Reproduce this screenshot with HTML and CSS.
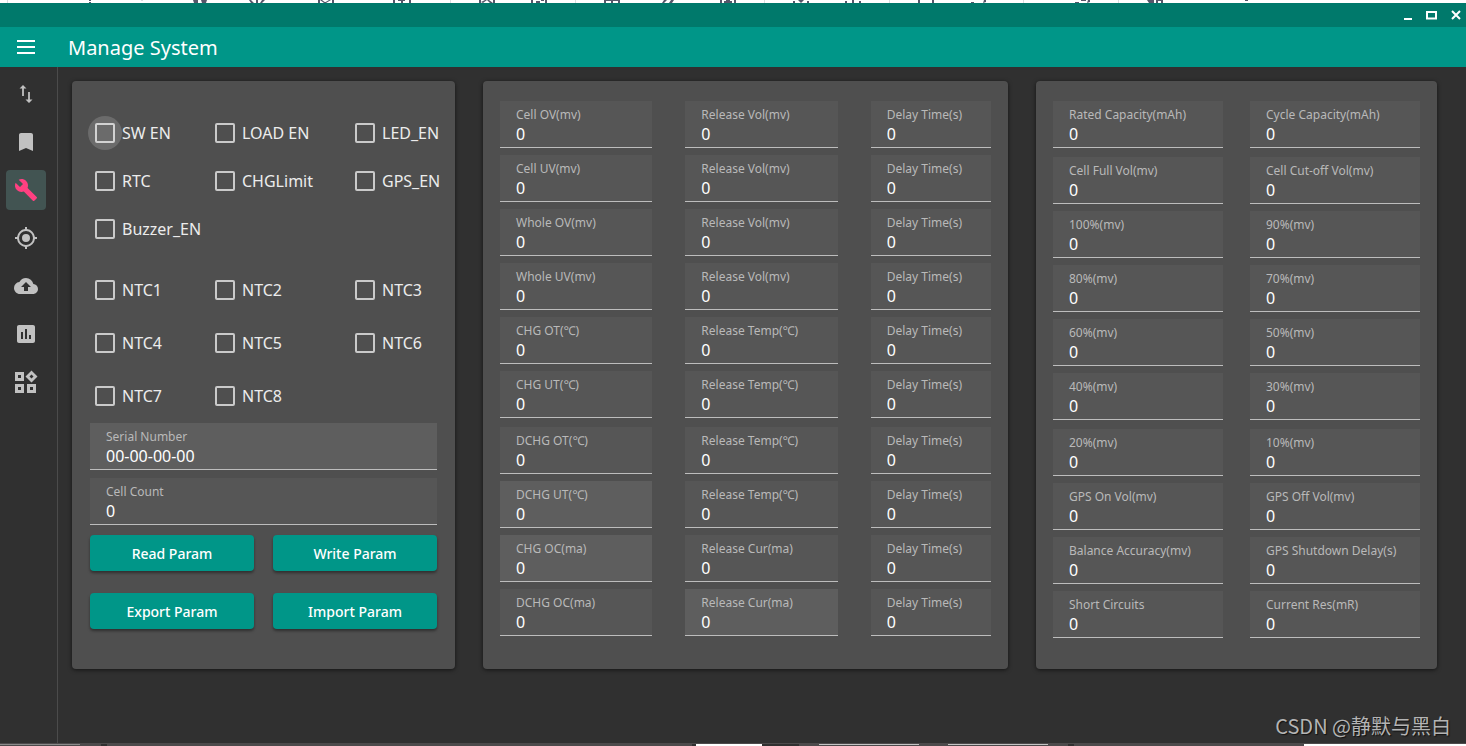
FILE: index.html
```html
<!DOCTYPE html>
<html lang="en">
<head>
<meta charset="utf-8">
<title>Manage System</title>
<link rel="stylesheet" href="styles.css">
</head>
<body>
<svg class="strip strip-top" aria-hidden="true">
  <path class="ink" d="M89 0h2v1h-2zM89 2h2v1h-2zM193 0h5v3h-4zM201 0h6l-1 3h-4zM249 0h2l3 3h-3zM256 0h2v3h-2zM262 0h3l-3 3h-2zM318 0h2v3h-2zM332 0h2v3h-2zM320 0l4 3h2l-4-3zM331 0l-5 3h-2l5-3zM393 0h2v3h-2zM409 0h2v3h-2zM398 0h7v1h-7zM401 1h2v2h-2zM479 0h2v3h-2zM493 0h2v3h-2zM481 2l4-2h2l-4 3zM489 0l4 3h-3l-3-3zM531 0h2v3h-2zM545 0h2v3h-2zM536 1h4v2h-4zM541 0h3v1h-3zM604 0h16v3h-2v-2h-5v2h-2v-2h-5v2h-2zM664 0h3l-3 3h-2zM671 0h3l-2 3h-3zM720 0h2v3h-2zM724 1h8v2h-8zM734 0h2v3h-2zM726 0h4v1h-4zM793 1h2v2h-2zM798 0h6l-3 3zM807 1h2v2h-2zM845 1h2v2h-2zM852 0h2v3h-2zM859 1h2v2h-2zM918 0h2v3h-2zM932 0h2v3h-2zM971 2h3v1h-3zM984 0h2v2l-3 1zM1075 2h4v1h-4zM1081 0h5v1h-5zM1088 0h2v2l-3 1zM1147 0h7v3h-5zM1156 0h7v1h-5v2h-2zM1161 1h2v2h-2zM1245 0h3v1h-3z"/>
  <path class="rule" d="M7 0h1v3h-1zM141 0h2v1h-2zM450 0h1v3h-1zM575 0h1v3h-1zM764 0h1v3h-1zM889 0h1v3h-1zM1023 0h1v3h-1zM1118 0h1v3h-1z"/>
</svg>
<div class="titlebar">
  <button class="win" aria-label="Minimize"><svg width="12" height="12"><path d="M2 10h8" stroke-width="2"/></svg></button>
  <button class="win" aria-label="Maximize"><svg width="12" height="12"><path d="M0 3h11M1 3v7M10 3v7M0 9.500h11" stroke-width="2"/></svg></button>
  <button class="win" aria-label="Close"><svg width="12" height="12"><path d="M2 2l8 8M10 2l-8 8" stroke-width="2"/></svg></button>
</div>
<header class="appbar">
  <button class="menu" aria-label="Menu"><svg width="18" height="14"><path d="M0 1h18M0 7h18M0 13h18" stroke="#fff" stroke-width="2"/></svg></button>
  <h1>Manage System</h1>
</header>
<div class="shell">
  <nav class="side" aria-label="Main">
    <button aria-label="Transfer"><svg viewBox="0 0 24 24"><path d="M9 3 5.500 6.500h2.600V14h1.800V6.500h2.600zM15.900 17.500V10h-1.800v7.500h-2.600L15 21l3.500-3.500z"/></svg></button>
    <button aria-label="Bookmarks"><svg viewBox="0 0 24 24"><path d="M17 3H7c-1.100 0-2 .9-2 2v16l7-3 7 3V5c0-1.100-.9-2-2-2z"/></svg></button>
    <button class="on" aria-label="Manage"><svg viewBox="0 0 24 24"><path d="m22.700 19-9.100-9.100c.9-2.300.4-5-1.500-6.900-2-2-5-2.400-7.400-1.300L9 6 6 9 1.600 4.700C.4 7.100.9 10.100 2.900 12.100c1.900 1.900 4.600 2.400 6.900 1.500l9.100 9.100c.4.4 1 .4 1.400 0l2.300-2.300c.5-.4.5-1.100.1-1.400z"/></svg></button>
    <button aria-label="Location"><svg viewBox="0 0 24 24"><path d="M12 8a4 4 0 1 0 0 8 4 4 0 0 0 0-8zm8.940 3A8.990 8.990 0 0 0 13 3.060V1h-2v2.060A8.990 8.990 0 0 0 3.060 11H1v2h2.060A8.990 8.990 0 0 0 11 20.940V23h2v-2.060A8.990 8.990 0 0 0 20.940 13H23v-2h-2.060zM12 19a7 7 0 1 1 0-14 7 7 0 0 1 0 14z"/></svg></button>
    <button aria-label="Upload"><svg viewBox="0 0 24 24"><path d="M19.350 10.040A7.490 7.490 0 0 0 12 4C9.110 4 6.600 5.640 5.350 8.040A5.994 5.994 0 0 0 0 14c0 3.310 2.690 6 6 6h13c2.760 0 5-2.240 5-5 0-2.640-2.050-4.780-4.650-4.960zM14 13v4h-4v-4H7l5-5 5 5h-3z"/></svg></button>
    <button aria-label="Statistics"><svg viewBox="0 0 24 24"><path d="M19 3H5c-1.100 0-2 .9-2 2v14c0 1.100.9 2 2 2h14c1.100 0 2-.9 2-2V5c0-1.100-.9-2-2-2zM9 17H7v-7h2v7zm4 0h-2V7h2v10zm4 0h-2v-4h2v4z"/></svg></button>
    <button aria-label="Widgets"><svg viewBox="0 0 24 24"><path fill-rule="evenodd" d="M1 2h9v9H1zm3 3v3h3V5zM1 14h9v9H1zm3 3v3h3v-3zM13 14h9v9h-9zm3 3v3h3v-3zM17.500.5l6 6-6 6-6-6zm0 4-2 2 2 2 2-2z"/></svg></button>
  </nav>
  <main class="cards" id="cards">
    <section class="card card-switches">
      <div class="checks">
        <label class="focus"><input type="checkbox">SW EN</label>
        <label><input type="checkbox">LOAD EN</label>
        <label><input type="checkbox">LED_EN</label>
        <label><input type="checkbox">RTC</label>
        <label><input type="checkbox">CHGLimit</label>
        <label><input type="checkbox">GPS_EN</label>
        <label><input type="checkbox">Buzzer_EN</label>
      </div>
      <div class="checks checks-ntc">
        <label><input type="checkbox">NTC1</label>
        <label><input type="checkbox">NTC2</label>
        <label><input type="checkbox">NTC3</label>
        <label><input type="checkbox">NTC4</label>
        <label><input type="checkbox">NTC5</label>
        <label><input type="checkbox">NTC6</label>
        <label><input type="checkbox">NTC7</label>
        <label><input type="checkbox">NTC8</label>
      </div>
      <div class="identity">
        <label class="field lit"><span>Serial Number</span><input type="text" value="00-00-00-00"></label>
        <label class="field"><span>Cell Count</span><input type="text" value="0"></label>
      </div>
      <div class="actions">
        <button>Read Param</button>
        <button>Write Param</button>
        <button>Export Param</button>
        <button>Import Param</button>
      </div>
    </section>
    <section class="card card-protect">
      <div class="fields">
        <label class="field"><span>Cell OV(mv)</span><input type="text" value="0"></label>
        <label class="field"><span>Release Vol(mv)</span><input type="text" value="0"></label>
        <label class="field"><span>Delay Time(s)</span><input type="text" value="0"></label>
        <label class="field"><span>Cell UV(mv)</span><input type="text" value="0"></label>
        <label class="field"><span>Release Vol(mv)</span><input type="text" value="0"></label>
        <label class="field"><span>Delay Time(s)</span><input type="text" value="0"></label>
        <label class="field"><span>Whole OV(mv)</span><input type="text" value="0"></label>
        <label class="field"><span>Release Vol(mv)</span><input type="text" value="0"></label>
        <label class="field"><span>Delay Time(s)</span><input type="text" value="0"></label>
        <label class="field"><span>Whole UV(mv)</span><input type="text" value="0"></label>
        <label class="field"><span>Release Vol(mv)</span><input type="text" value="0"></label>
        <label class="field"><span>Delay Time(s)</span><input type="text" value="0"></label>
        <label class="field"><span>CHG OT(℃)</span><input type="text" value="0"></label>
        <label class="field"><span>Release Temp(℃)</span><input type="text" value="0"></label>
        <label class="field"><span>Delay Time(s)</span><input type="text" value="0"></label>
        <label class="field"><span>CHG UT(℃)</span><input type="text" value="0"></label>
        <label class="field"><span>Release Temp(℃)</span><input type="text" value="0"></label>
        <label class="field"><span>Delay Time(s)</span><input type="text" value="0"></label>
      </div>
      <div class="fields">
        <label class="field"><span>DCHG OT(℃)</span><input type="text" value="0"></label>
        <label class="field"><span>Release Temp(℃)</span><input type="text" value="0"></label>
        <label class="field"><span>Delay Time(s)</span><input type="text" value="0"></label>
        <label class="field lit"><span>DCHG UT(℃)</span><input type="text" value="0"></label>
        <label class="field"><span>Release Temp(℃)</span><input type="text" value="0"></label>
        <label class="field"><span>Delay Time(s)</span><input type="text" value="0"></label>
        <label class="field lit"><span>CHG OC(ma)</span><input type="text" value="0"></label>
        <label class="field"><span>Release Cur(ma)</span><input type="text" value="0"></label>
        <label class="field"><span>Delay Time(s)</span><input type="text" value="0"></label>
        <label class="field"><span>DCHG OC(ma)</span><input type="text" value="0"></label>
        <label class="field lit"><span>Release Cur(ma)</span><input type="text" value="0"></label>
        <label class="field"><span>Delay Time(s)</span><input type="text" value="0"></label>
      </div>
    </section>
    <section class="card card-capacity">
      <div class="fields">
        <label class="field"><span>Rated Capacity(mAh)</span><input type="text" value="0"></label>
        <label class="field"><span>Cycle Capacity(mAh)</span><input type="text" value="0"></label>
      </div>
      <div class="fields">
        <label class="field"><span>Cell Full Vol(mv)</span><input type="text" value="0"></label>
        <label class="field"><span>Cell Cut-off Vol(mv)</span><input type="text" value="0"></label>
        <label class="field"><span>100%(mv)</span><input type="text" value="0"></label>
        <label class="field"><span>90%(mv)</span><input type="text" value="0"></label>
        <label class="field"><span>80%(mv)</span><input type="text" value="0"></label>
        <label class="field"><span>70%(mv)</span><input type="text" value="0"></label>
        <label class="field"><span>60%(mv)</span><input type="text" value="0"></label>
        <label class="field"><span>50%(mv)</span><input type="text" value="0"></label>
        <label class="field"><span>40%(mv)</span><input type="text" value="0"></label>
        <label class="field"><span>30%(mv)</span><input type="text" value="0"></label>
      </div>
      <div class="fields">
        <label class="field"><span>20%(mv)</span><input type="text" value="0"></label>
        <label class="field"><span>10%(mv)</span><input type="text" value="0"></label>
        <label class="field"><span>GPS On Vol(mv)</span><input type="text" value="0"></label>
        <label class="field"><span>GPS Off Vol(mv)</span><input type="text" value="0"></label>
        <label class="field"><span>Balance Accuracy(mv)</span><input type="text" value="0"></label>
        <label class="field"><span>GPS Shutdown Delay(s)</span><input type="text" value="0"></label>
        <label class="field"><span>Short Circuits</span><input type="text" value="0"></label>
        <label class="field"><span>Current Res(mR)</span><input type="text" value="0"></label>
      </div>
    </section>
  </main>
</div>
<svg class="strip strip-bottom" aria-hidden="true">
  <path fill="#8a8a8a" d="M0 1h80v1H0z"/>
  <path fill="#303030" d="M101 1h6v2h-6zM692 1h4v2h-4zM762 1h37v2h-37zM1068 1h6v2h-6z"/>
  <path fill="#c4c4c4" d="M819 1h100v1H819zM948 1h100v1H948z"/>
  <path fill="#fff" d="M696 1h66v2h-66zM1304 1h162v2h-162z"/>
</svg>
<div class="watermark">CSDN @静默与黑白</div>
</body>
</html>
```
FILE: styles.css
```css
* {
  box-sizing: border-box;
}

body {
  margin: 0;
  min-height: 100vh;
  display: flex;
  flex-direction: column;
  position: relative;
  background: #303030;
  color: #fff;
  font: 16px/24px "Noto Sans", "Noto Sans CJK SC", sans-serif;
}

button,
input {
  font: inherit;
  color: inherit;
}

button {
  border: 0;
  padding: 0;
  background: none;
}

.strip {
  display: block;
  width: 100%;
  height: 3px;
  flex: none;
}

.strip-top {
  background: #fff;
}

.strip-bottom {
  background: #4c4a4b;
}

.ink {
  fill: #56566a;
}

.rule {
  fill: #dcdce0;
}

.titlebar {
  display: flex;
  justify-content: flex-end;
  align-items: center;
  gap: 12px;
  height: 24px;
  padding-right: 4px;
  background: #00796b;
}

.win {
  display: flex;
}

.win svg {
  fill: none;
  stroke: #fff;
}

.appbar {
  display: flex;
  align-items: center;
  height: 40px;
  background: #009688;
}

.menu {
  display: flex;
  padding: 0 33px 0 17px;
}

h1 {
  margin: 0;
  padding-top: 2px;
  font-size: 20px;
  font-weight: 400;
}

.shell {
  flex: 1;
  display: flex;
}

.side {
  flex: none;
  display: flex;
  flex-direction: column;
  gap: 8px;
  padding: 7px 11px 0 6px;
  border-right: 1px solid #4b4b4b;
}

.side button {
  display: grid;
  place-items: center;
  width: 40px;
  height: 40px;
  border-radius: 4px;
}

.side svg {
  width: 24px;
  height: 24px;
  fill: #c1c1c1;
}

.side .on {
  background: #425452;
}

.side .on svg {
  fill: #ff4081;
}

.cards {
  flex: 1;
  display: grid;
  grid-template-columns: minmax(0, 383fr) minmax(0, 525fr) minmax(0, 401fr);
  align-items: start;
  gap: 28px;
  padding: 14px 29px 74px 14px;
}

.card {
  min-height: 588px;
  padding: 20px 17px;
  border-radius: 4px;
  background: #4f4f4f;
  box-shadow: 0 1px 4px rgba(0, 0, 0, 0.6);
}

.card-switches {
  padding: 28px 18px 40px;
}

.checks {
  display: grid;
  grid-template-columns: 120px 140px minmax(0, 1fr);
  grid-auto-rows: 48px;
  padding-left: 5px;
}

.checks-ntc {
  grid-auto-rows: 53px;
  padding-top: 10px;
  padding-bottom: 1px;
}

.checks label {
  position: relative;
  display: flex;
  align-items: center;
  gap: 7px;
  white-space: nowrap;
  color: #ececec;
}

.checks input {
  appearance: none;
  flex: none;
  width: 20px;
  height: 20px;
  margin: 0;
  border: 2px solid #cacaca;
  border-radius: 2px;
}

.checks .focus::before {
  content: "";
  position: absolute;
  left: -7px;
  top: 7px;
  width: 34px;
  height: 34px;
  border-radius: 50%;
  background: rgba(255, 255, 255, 0.16);
}

.identity {
  display: grid;
  gap: 8px;
}

.field {
  display: block;
  min-width: 0;
  padding: 6px 16px 2px;
  border-bottom: 1px solid #bdbdbd;
  background: #565656;
}

.field.lit {
  background: #5e5e5e;
}

.field span {
  display: block;
  font-size: 12px;
  line-height: 16px;
  white-space: nowrap;
  color: #b9b9b9;
}

.field input {
  display: block;
  width: 100%;
  height: 22px;
  padding: 0;
  border: 0;
  outline: 0;
  background: none;
}

.actions {
  display: grid;
  grid-template-columns: 1fr 1fr;
  gap: 22px 19px;
  padding-top: 10px;
}

.actions button {
  height: 36px;
  padding-top: 2px;
  border-radius: 4px;
  background: #009688;
  box-shadow: 0 2px 3px rgba(0, 0, 0, 0.4);
  font-size: 14px;
  font-weight: 500;
}

.card-protect,
.card-capacity {
  display: flex;
  flex-direction: column;
  gap: 9px;
}

.fields {
  display: grid;
  gap: 7px 33px;
}

.card-protect .fields {
  grid-template-columns: 152fr 152fr 120fr;
}

.card-capacity .fields {
  grid-template-columns: 1fr 1fr;
  column-gap: 27px;
}

.watermark {
  position: absolute;
  right: 15px;
  bottom: 6px;
  font: 20px/28px "Noto Sans CJK SC", sans-serif;
  color: #b4b4b4;
  text-shadow: 1px 1px 1px #111;
}
```
